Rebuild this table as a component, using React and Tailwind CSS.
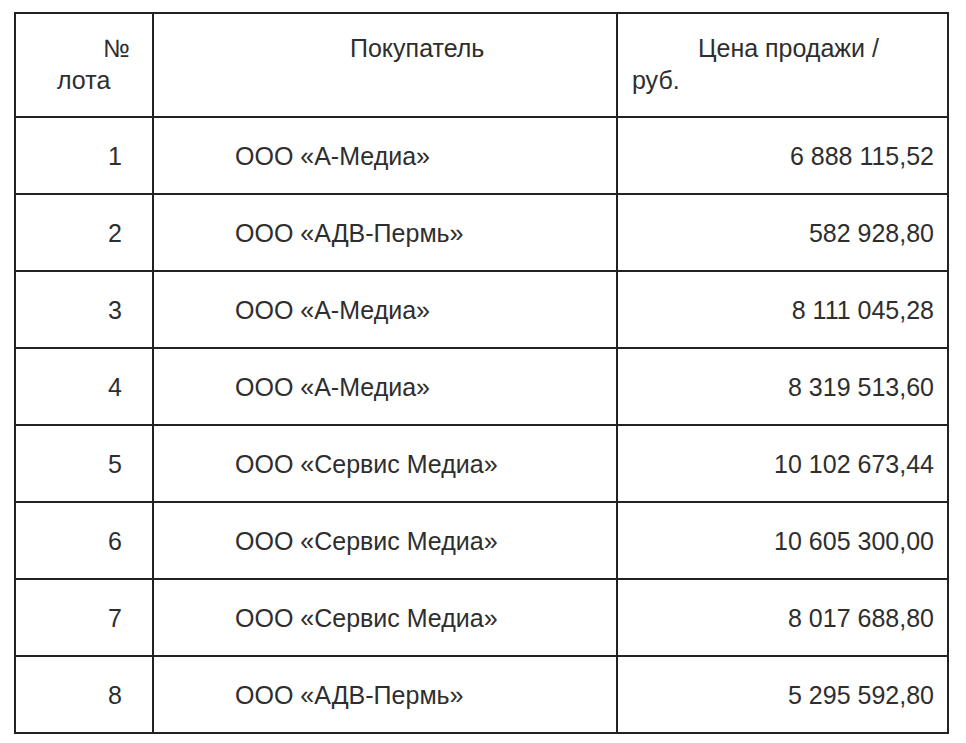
import React from 'react';

const rows = [
  { n: '1', buyer: 'ООО «А-Медиа»', price: '6 888 115,52' },
  { n: '2', buyer: 'ООО «АДВ-Пермь»', price: '582 928,80' },
  { n: '3', buyer: 'ООО «А-Медиа»', price: '8 111 045,28' },
  { n: '4', buyer: 'ООО «А-Медиа»', price: '8 319 513,60' },
  { n: '5', buyer: 'ООО «Сервис Медиа»', price: '10 102 673,44' },
  { n: '6', buyer: 'ООО «Сервис Медиа»', price: '10 605 300,00' },
  { n: '7', buyer: 'ООО «Сервис Медиа»', price: '8 017 688,80' },
  { n: '8', buyer: 'ООО «АДВ-Пермь»', price: '5 295 592,80' },
];

const App = () => {
  return (
    <div className="w-[966px] h-[743px] bg-white pt-[12px] pl-[14px] font-['Liberation_Sans',Arial,sans-serif] text-[25px] leading-[32px] text-[#2e2e2e]">
      <div className="w-[935px] border-2 border-[#222]">
        {/* header */}
        <div className="grid grid-cols-[138px_464px_1fr] h-[102px]">
          <div className="border-r-2 border-[#222] pt-[18px]">
            <div className="text-right pr-[22px]">№</div>
            <div className="pl-[41px]">лота</div>
          </div>
          <div className="border-r-2 border-[#222] pt-[18px] pl-[196px]">Покупатель</div>
          <div className="pt-[18px] pl-[14px]">
            <div className="pl-[66px]">Цена продажи /</div>
            <div>руб.</div>
          </div>
        </div>

        {rows.map((r) => (
          <div key={r.n} className="grid grid-cols-[138px_464px_1fr] h-[77px] border-t-2 border-[#222]">
            <div className="border-r-2 border-[#222] flex items-center justify-end pr-[30px]">{r.n}</div>
            <div className="border-r-2 border-[#222] flex items-center pl-[81px]">{r.buyer}</div>
            <div className="flex items-center justify-end pr-[13px]">{r.price}</div>
          </div>
        ))}
      </div>
    </div>
  );
};

export default App;
